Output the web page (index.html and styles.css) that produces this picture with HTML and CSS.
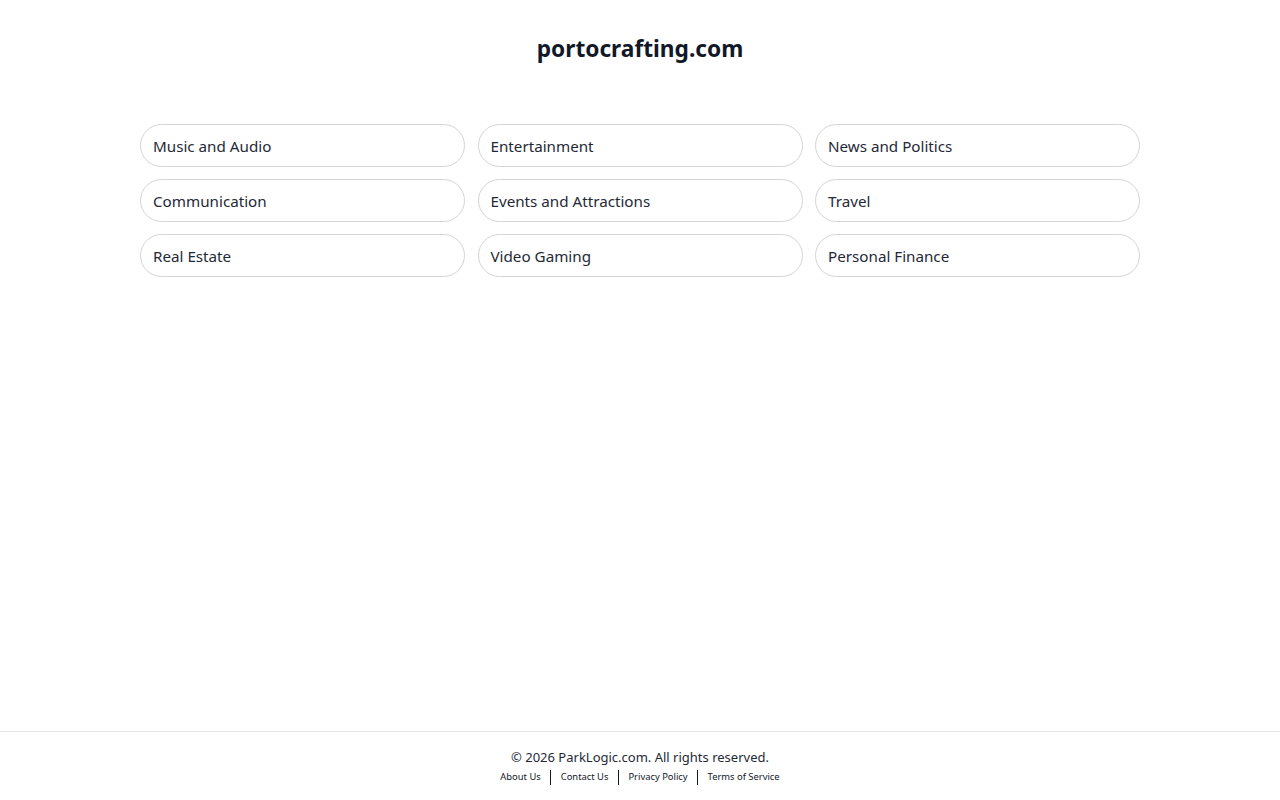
FILE: index.html
```html
<!DOCTYPE html>
<html lang="en">
<head>
<meta charset="utf-8">
<title>portocrafting.com</title>
<link rel="stylesheet" href="styles.css">
</head>
<body>
<main class="main">
  <h1 class="title">portocrafting.com</h1>
  <div class="grid">
    <a class="pill" href="#">Music and Audio</a>
    <a class="pill" href="#">Entertainment</a>
    <a class="pill" href="#">News and Politics</a>
    <a class="pill" href="#">Communication</a>
    <a class="pill" href="#">Events and Attractions</a>
    <a class="pill" href="#">Travel</a>
    <a class="pill" href="#">Real Estate</a>
    <a class="pill" href="#">Video Gaming</a>
    <a class="pill" href="#">Personal Finance</a>
  </div>
</main>
<footer class="footer">
  <p class="copy">© 2026 ParkLogic.com. All rights reserved.</p>
  <nav class="links">
    <a href="#">About Us</a>
    <span class="sep"></span>
    <a href="#">Contact Us</a>
    <span class="sep"></span>
    <a href="#">Privacy Policy</a>
    <span class="sep"></span>
    <a href="#">Terms of Service</a>
  </nav>
</footer>
</body>
</html>
```
FILE: styles.css
```css
html, body {
  margin: 0;
  padding: 0;
  height: 100%;
}
body {
  font-family: "Noto Sans", "Open Sans", sans-serif;
  color: #111827;
  background: #fff;
  display: flex;
  flex-direction: column;
  min-height: 100vh;
}
.main {
  flex: 1;
  display: flex;
  flex-direction: column;
  align-items: center;
}
.title {
  margin: 33px 0 0;
  font-size: 22.7px;
  font-weight: 700;
  line-height: 32px;
  color: #111827;
}
.grid {
  margin-top: 59px;
  width: 1000px;
  display: grid;
  grid-template-columns: repeat(3, 1fr);
  column-gap: 12.5px;
  row-gap: 12px;
}
.pill {
  display: flex;
  align-items: center;
  height: 43px;
  box-sizing: border-box;
  padding: 0 12px;
  border: 1px solid #d4d4d8;
  border-radius: 9999px;
  font-size: 15.2px;
  color: #1f2937;
  text-decoration: none;
}
.footer {
  border-top: 1px solid #e5e7eb;
  height: 69px;
  display: flex;
  flex-direction: column;
  align-items: center;
  padding-top: 15px;
  box-sizing: border-box;
}
.copy {
  margin: 0;
  font-size: 13px;
  line-height: 20px;
  color: #1f2937;
}
.links {
  display: flex;
  align-items: center;
  gap: 9.5px;
  margin-top: 2px;
}
.links a {
  font-size: 9.4px;
  line-height: 16px;
  color: #111827;
  text-decoration: none;
}
.sep {
  width: 1px;
  height: 15px;
  background: #111827;
}
```
